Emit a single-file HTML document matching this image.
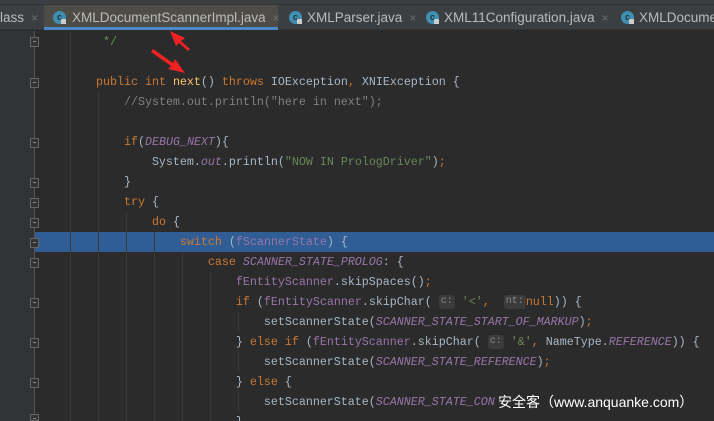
<!DOCTYPE html>
<html style="width:714px;height:421px;overflow:hidden"><head><meta charset="utf-8"><style>
*{margin:0;padding:0;box-sizing:border-box}
body{width:714px;height:421px;overflow:hidden;background:#2b2b2b;position:relative;font-family:"Liberation Sans",sans-serif}
#top{position:absolute;left:0;top:0;width:714px;height:5px;background:#3c3f41;border-bottom:1px solid #323232}
#tabs{position:absolute;left:0;top:5px;width:714px;height:25px;background:#3c3f41;border-bottom:1px solid #323232}
.tab{position:absolute;top:0;height:25px;color:#bbbbbb;font-size:13.5px;line-height:25px;white-space:nowrap}
.tab.act{background:#4e4c46;border-bottom:3px solid #4a88c7}
.ic{position:absolute;top:6px;width:13px;height:13px;border-radius:50%;background:#3f8fb3;color:#233;font-size:9px;line-height:13px;text-align:center;font-weight:bold}
.ic:after{content:"";position:absolute;left:8px;top:8px;width:5px;height:5px;background:#ccc}
.x{color:#6e6e6e;font-size:12px}
#gut{position:absolute;left:0;top:31px;width:35px;height:390px;background:#313335}
#gl{position:absolute;left:34px;top:31px;width:1px;height:390px;background:#555}
.fold{position:absolute;left:30px;width:9px;height:10px;border:1px solid #666;background:#313335}
.fold:after{content:"";position:absolute;left:2px;top:3px;width:3px;height:1px;background:#888}
#hl{position:absolute;left:35px;top:232px;width:679px;height:20px;background:#2f5d94}
.g{position:absolute;width:1px;background:#393939}
#code{position:absolute;left:68px;top:32px;height:389px;overflow:hidden;font-family:"Liberation Mono",monospace;font-size:11.67px;color:#a9b7c6;white-space:normal}
#code div{height:20px;line-height:20px;white-space:pre}
.k{color:#cc7832}.m{color:#ffc66d}.f{color:#9876aa}.i{color:#9876aa;font-style:italic}.c{color:#808080}.d{color:#629755}.s{color:#6a8759}
.h{display:inline-block;line-height:14px;height:14px;vertical-align:middle;background:#3b3b3b;color:#8a8a8a;border-radius:3px;font-size:10px;padding:0 2px}
#wm{position:absolute;left:498px;top:392px;color:#fff;font-family:"Liberation Sans","Noto Sans CJK SC",sans-serif;font-size:14px}
</style></head><body>
<div id="top"></div>
<div id="tabs">
<div class="tab" style="left:0">lass <span class="x">&nbsp;×</span></div>
<div class="tab act" style="left:44px;width:234px;padding-left:28px"><span class="ic" style="left:9px">c</span>XMLDocumentScannerImpl.java <span class="x">&nbsp;×</span></div>
<div class="tab" style="left:287px;padding-left:20px"><span class="ic" style="left:2px">c</span>XMLParser.java <span class="x">&nbsp;×</span></div>
<div class="tab" style="left:424px;padding-left:20px"><span class="ic" style="left:2px">c</span>XML11Configuration.java <span class="x">&nbsp;×</span></div>
<div class="tab" style="left:619px;padding-left:20px"><span class="ic" style="left:2px">c</span>XMLDocume</div>
</div>
<div id="gut"></div><div id="gl"></div>
<div id="hl"></div>
<div class="g" style="left:70px;top:31px;height:390px"></div>
<div class="g" style="left:98px;top:92px;height:329px"></div>
<div class="g" style="left:126px;top:212px;height:209px"></div>
<div class="g" style="left:154px;top:232px;height:189px"></div>
<div class="g" style="left:182px;top:252px;height:169px"></div>
<div class="g" style="left:210px;top:272px;height:149px"></div>
<div class="g" style="left:238px;top:312px;height:20px"></div>
<div class="g" style="left:238px;top:352px;height:20px"></div>
<div class="g" style="left:238px;top:392px;height:20px"></div>
<div class="fold" style="top:37px"></div><div class="fold" style="top:78px"></div><div class="fold" style="top:138px"></div><div class="fold" style="top:178px"></div><div class="fold" style="top:198px"></div><div class="fold" style="top:218px"></div><div class="fold" style="top:238px"></div><div class="fold" style="top:258px"></div><div class="fold" style="top:298px"></div><div class="fold" style="top:338px"></div><div class="fold" style="top:378px"></div><div class="fold" style="top:414px;height:7px"></div>
<div id="code"><div><span class="d">     */</span></div><div> </div><div>    <span class="k">public int </span><span class="m">next</span>() <span class="k">throws </span>IOException<span class="k">, </span>XNIException {</div><div>        <span class="c">//System.out.println("here in next");</span></div><div> </div><div>        <span class="k">if</span>(<span class="i">DEBUG_NEXT</span>){</div><div>            System.<span class="i">out</span>.println(<span class="s">"NOW IN PrologDriver"</span>)<span class="k">;</span></div><div>        }</div><div>        <span class="k">try </span>{</div><div>            <span class="k">do </span>{</div><div>                <span class="k">switch </span>(<span class="f">fScannerState</span>) {</div><div>                    <span class="k">case </span><span class="i">SCANNER_STATE_PROLOG</span>: {</div><div>                        <span class="f">fEntityScanner</span>.skipSpaces()<span class="k">;</span></div><div>                        <span class="k">if </span>(<span class="f">fEntityScanner</span>.skipChar( <span class="h">c:</span> <span class="s">'&lt;'</span><span class="k">, </span> <span class="h">nt:</span><span class="k">null</span>)) {</div><div>                            setScannerState(<span class="i">SCANNER_STATE_START_OF_MARKUP</span>)<span class="k">;</span></div><div>                        } <span class="k">else if </span>(<span class="f">fEntityScanner</span>.skipChar( <span class="h">c:</span> <span class="s">'&amp;'</span><span class="k">, </span>NameType.<span class="i">REFERENCE</span>)) {</div><div>                            setScannerState(<span class="i">SCANNER_STATE_REFERENCE</span>)<span class="k">;</span></div><div>                        } <span class="k">else </span>{</div><div>                            setScannerState(<span class="i">SCANNER_STATE_CON</span></div><div>                        }</div></div>
<div id="wm">安全客（www.anquanke.com）</div>
<svg style="position:absolute;left:0;top:0" width="714" height="421">
<polygon points="170,31 185,38 181,41 190,49 188,51 179,43 176,46" fill="#ee2222"/>
<polygon points="185,73 168,69 171,66 151,52 153,49 173,63 175,59" fill="#ee2222"/>
</svg>
</body></html>
